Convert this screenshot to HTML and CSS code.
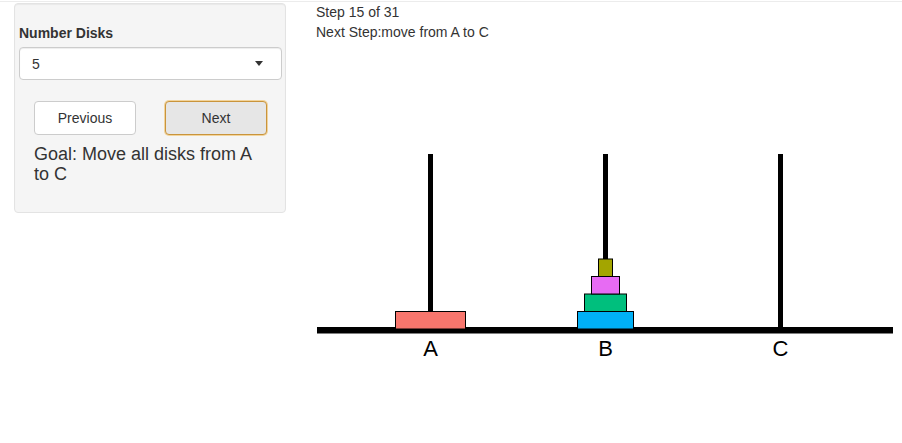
FILE: index.html
```html
<!DOCTYPE html>
<html>
<head>
<meta charset="utf-8">
<link rel="stylesheet" href="styles.css">
</head>
<body>
<div class="topline"></div>
<div class="layout">
  <aside class="sidebar">
    <div class="well">
      <div class="form-group">
        <label class="control-label">Number Disks</label>
        <div class="select">
          <span class="select-value">5</span>
          <span class="caret"></span>
        </div>
      </div>
      <div class="btn-row">
        <button class="btn">Previous</button>
        <button class="btn btn-focus">Next</button>
      </div>
      <h4 class="goal">Goal: Move all disks from A to C</h4>
    </div>
  </aside>
  <main class="main">
    <div class="status">
      <div>Step 15 of 31</div>
      <div>Next Step:move from A to C</div>
    </div>
    <svg class="plot" width="586" height="400" viewBox="0 0 586 400" xmlns="http://www.w3.org/2000/svg">
      <rect x="1" y="285" width="576" height="6.5" fill="#000"/>
      <rect x="112" y="112" width="5" height="174" fill="#000"/>
      <rect x="287" y="112" width="5" height="174" fill="#000"/>
      <rect x="462" y="112" width="5" height="174" fill="#000"/>
      <rect x="79.5" y="269.5" width="70" height="17.5" fill="#F8766D" stroke="#000" stroke-width="1"/>
      <rect x="261.5" y="269.5" width="56" height="17.5" fill="#00B0F6" stroke="#000" stroke-width="1"/>
      <rect x="268.5" y="252" width="42" height="17.5" fill="#00BF7D" stroke="#000" stroke-width="1"/>
      <rect x="275.5" y="234.5" width="28" height="17.5" fill="#E76BF3" stroke="#000" stroke-width="1"/>
      <rect x="282.5" y="217" width="14" height="17.5" fill="#A3A500" stroke="#000" stroke-width="1"/>
      <text class="peg-label" x="114.5" y="314" text-anchor="middle">A</text>
      <text class="peg-label" x="289.5" y="314" text-anchor="middle">B</text>
      <text class="peg-label" x="464.5" y="314" text-anchor="middle">C</text>
    </svg>
  </main>
</div>
</body>
</html>
```
FILE: styles.css
```css
html, body {
  margin: 0;
  padding: 0;
  background: #fff;
}
body {
  font-family: "Liberation Sans", Arial, sans-serif;
  font-size: 14px;
  line-height: 20px;
  color: #333;
}
.topline {
  height: 1px;
  margin-top: 1px;
  background: #ececec;
}
.layout {
  display: grid;
  grid-template-columns: 301px 1fr;
}
.sidebar {
  padding: 0 15px 0 14px;
}
.well {
  margin-top: 1px;
  background: #f5f5f5;
  border: 1px solid #e3e3e3;
  border-radius: 4px;
  box-shadow: inset 0 1px 1px rgba(0,0,0,0.05);
  padding: 19px 3px 17px 4px;
}
.form-group {
  margin-bottom: 15px;
}
.control-label {
  display: block;
  font-weight: 700;
  margin-bottom: 4px;
}
.select {
  height: 33px;
  box-sizing: border-box;
  background: #fff;
  border: 1px solid #cccccc;
  border-radius: 4px;
  box-shadow: inset 0 1px 1px rgba(0,0,0,0.075);
  display: flex;
  align-items: center;
  justify-content: space-between;
  padding: 0 18px 0 12px;
}
.caret {
  width: 0;
  height: 0;
  border-left: 4px solid transparent;
  border-right: 4px solid transparent;
  border-top: 5px solid #333;
}
.btn-row {
  display: flex;
  justify-content: space-between;
  padding: 6px 15px 0 15px;
}
.btn {
  width: 102px;
  height: 34px;
  box-sizing: border-box;
  font-family: "Liberation Sans", Arial, sans-serif;
  font-size: 14px;
  color: #333;
  background: #fff;
  border: 1px solid #ccc;
  border-radius: 4px;
  padding: 6px 12px;
}
.btn-focus {
  background: #e6e6e6;
  border: 1px solid #c9943c;
  box-shadow: 0 0 0 1px #f2d49c;
}
.goal {
  font-size: 18px;
  line-height: 19.8px;
  font-weight: 400;
  margin: 10px 0;
  padding: 0 15px;
}
.main {
  padding: 0 0 0 15px;
}
.status {
  line-height: 20px;
}
.plot {
  display: block;
}
.peg-label {
  font-family: "Liberation Sans", Arial, sans-serif;
  font-size: 22px;
  fill: #000;
}
```
